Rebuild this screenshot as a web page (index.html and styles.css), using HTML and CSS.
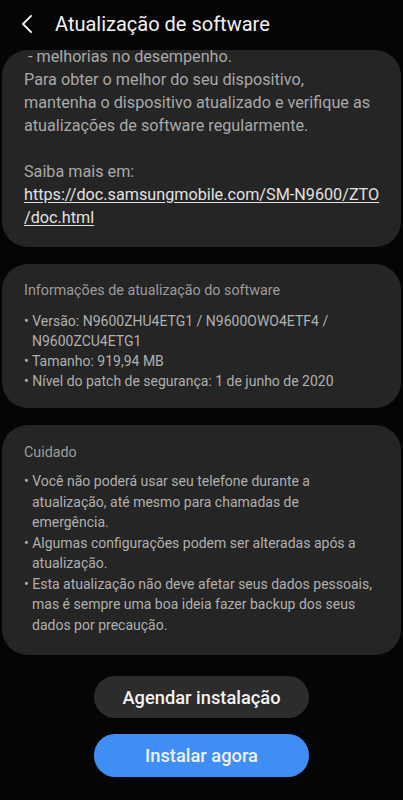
FILE: index.html
```html
<!DOCTYPE html>
<html lang="pt">
<head>
    <meta charset="UTF-8">
    <meta name="viewport" content="width=device-width, initial-scale=1.0">
    <title>Atualização de software</title>
    <link rel="stylesheet" href="styles.css">
</head>
<body>
    <div class="header">
        <svg class="back-icon" width="12" height="18" viewBox="0 0 12 18">
            <polyline points="10,1 2,9 10,17" fill="none" stroke="#f2f2f2" stroke-width="1.8" stroke-linecap="round" stroke-linejoin="round"/>
        </svg>
        <h1 class="title">Atualização de software</h1>
    </div>

    <div class="content">
        <div class="card card-intro">
            <div class="intro-text">
                <p>&nbsp;- melhorias no desempenho.</p>
                <p>Para obter o melhor do seu dispositivo,<br>mantenha o dispositivo atualizado e verifique as<br>atualizações de software regularmente.</p>
                <p class="spacer">&nbsp;</p>
                <p>Saiba mais em:</p>
                <a class="doc-link" href="#">https://doc.samsungmobile.com/SM-N9600/ZTO<br>/doc.html</a>
            </div>
        </div>

        <div class="card card-info">
            <h2 class="card-heading">Informações de atualização do software</h2>
            <ul class="bullets">
                <li>Versão: N9600ZHU4ETG1 / N9600OWO4ETF4 / N9600ZCU4ETG1</li>
                <li>Tamanho: 919,94 MB</li>
                <li>Nível do patch de segurança: 1 de junho de 2020</li>
            </ul>
        </div>

        <div class="card card-warn">
            <h2 class="card-heading">Cuidado</h2>
            <ul class="bullets">
                <li>Você não poderá usar seu telefone durante a atualização, até mesmo para chamadas de emergência.</li>
                <li>Algumas configurações podem ser alteradas após a atualização.</li>
                <li>Esta atualização não deve afetar seus dados pessoais, mas é sempre uma boa ideia fazer backup dos seus dados por precaução.</li>
            </ul>
        </div>

        <div class="actions">
            <button class="btn btn-dark">Agendar instalação</button>
            <button class="btn btn-blue">Instalar agora</button>
        </div>
    </div>
</body>
</html>
```

FILE: styles.css
```css
body {
    margin: 0;
    background: #050505;
    font-family: Roboto, "Noto Sans", sans-serif;
    color: #a9a9a9;
}

.header {
    height: 50px;
    display: flex;
    align-items: center;
    padding-left: 21px;
    box-sizing: border-box;
}

.back-icon {
    display: block;
    margin-top: -2px;
}

.title {
    margin: 0 0 2px 22px;
    font-size: 20px;
    font-weight: 400;
    color: #f2f2f2;
}

.content {
    padding: 0 2px;
}

.card {
    background: #252525;
    border-radius: 26px;
    margin-bottom: 17px;
}

.card-intro {
    overflow: hidden;
    height: 197px;
    box-sizing: border-box;
    padding: 0 12px 0 22px;
    font-size: 16.2px;
    line-height: 23px;
    white-space: nowrap;
}

.intro-text {
    margin-top: -5px;
}

.intro-text p {
    margin: 0;
}

.doc-link {
    color: #e2e2e2;
    text-decoration: underline;
    text-underline-offset: 2px;
}

.card-info {
    padding: 16px 22px 17px;
}

.card-warn {
    padding: 17px 22px 20px;
}

.card-heading {
    margin: 0 0 11px;
    font-size: 14.3px;
    font-weight: 400;
    line-height: 20px;
    color: #9c9c9c;
}

.card-warn .card-heading {
    margin-bottom: 9px;
}

.bullets {
    list-style: none;
    margin: 0;
    padding: 0;
    font-size: 14px;
    line-height: 20px;
    color: #b0b0b0;
}

.card-warn .bullets {
    line-height: 20.5px;
}

.bullets li {
    padding-left: 8px;
    text-indent: -8px;
}

.bullets li::before {
    content: "• ";
}

.actions {
    display: flex;
    flex-direction: column;
    align-items: center;
    gap: 16px;
    padding-top: 4px;
}

.btn {
    width: 215px;
    height: 42px;
    border: none;
    border-radius: 21px;
    font-family: Roboto, "Noto Sans", sans-serif;
    font-size: 18.3px;
    font-weight: 500;
    color: #f2f2f2;
}

.btn-dark {
    background: #2c2c2c;
}

.btn-blue {
    background: #3e8ef6;
    height: 43px;
}
```
